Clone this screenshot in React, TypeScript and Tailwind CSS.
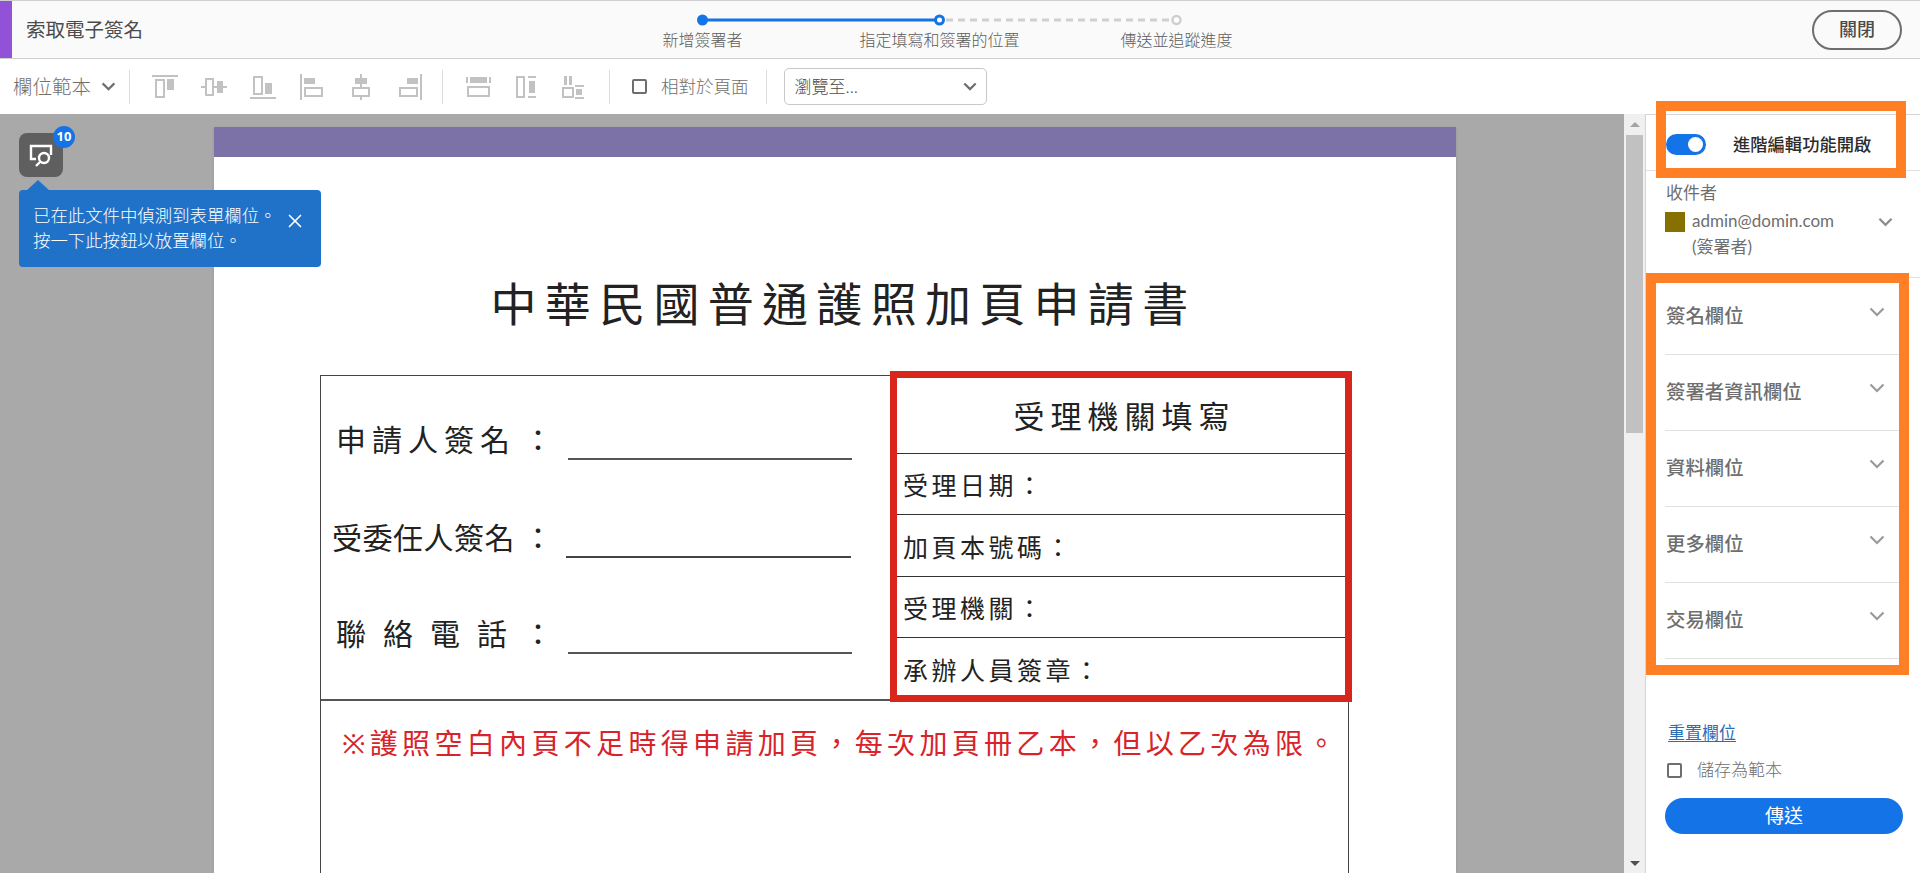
import { X } from "lucide-react";

const fieldGroups = ["簽名欄位", "簽署者資訊欄位", "資料欄位", "更多欄位", "交易欄位"];

function Chevron({ className = "", width = 2.5 }: { className?: string; width?: number }) {
  return (
    <svg viewBox="0 0 16 10" className={className} fill="none" stroke="currentColor" strokeWidth={width}>
      <path d="M1.5 1.5 8 8l6.5-6.5" />
    </svg>
  );
}

// alignment icons of the toolbar, all in a 26x26 box
function ToolIcon({ children, className = "" }: { children: React.ReactNode; className?: string }) {
  return (
    <svg viewBox="0 0 26 26" className={`w-[26px] h-[26px] text-[#c2c2c2] ${className}`} fill="none" stroke="currentColor" strokeWidth="2">
      {children}
    </svg>
  );
}

const fill = { fill: "currentColor", stroke: "none" };

function AlignIcons() {
  return (
    <>
      <div className="flex items-center gap-[23px]">
        <ToolIcon>
          <path d="M0 2h26" />
          <rect x="4" y="6" width="8" height="17" />
          <rect x="15" y="5" width="7" height="11" {...fill} />
        </ToolIcon>
        <ToolIcon>
          <path d="M0 13h5M12 13h4M22 13h4" />
          <rect x="5" y="5" width="7" height="16" />
          <rect x="16" y="7" width="6" height="12" {...fill} />
        </ToolIcon>
        <ToolIcon>
          <path d="M0 24h26" />
          <rect x="4" y="3" width="8" height="17" />
          <rect x="15" y="9" width="7" height="11" {...fill} />
        </ToolIcon>
        <ToolIcon>
          <path d="M2 0v26" />
          <rect x="5" y="4" width="11" height="6" {...fill} />
          <rect x="6" y="14" width="17" height="8" />
        </ToolIcon>
        <ToolIcon>
          <path d="M13 0v4M13 10v4M13 22v4" />
          <rect x="7" y="4" width="12" height="6" {...fill} />
          <rect x="5" y="14" width="16" height="8" />
        </ToolIcon>
        <ToolIcon>
          <path d="M24 0v26" />
          <rect x="10" y="4" width="11" height="6" {...fill} />
          <rect x="3" y="14" width="17" height="8" />
        </ToolIcon>
      </div>
      <div className="w-px h-[34px] bg-[#dcdcdc] ml-[19px] mr-[23px]" />
      <div className="flex items-center gap-[23px]">
        <ToolIcon>
          <path d="M1 3v6M24 3v6" />
          <rect x="4" y="3" width="17" height="6" {...fill} />
          <rect x="2" y="13" width="21" height="9" />
        </ToolIcon>
        <ToolIcon>
          <rect x="2" y="3" width="7" height="20" />
          <path d="M13 3h8M13 23h8" />
          <rect x="14" y="7" width="6" height="12" {...fill} />
        </ToolIcon>
        <ToolIcon className="-ml-[3px]">
          <rect x="2" y="14" width="10" height="9" />
          <rect x="3" y="2" width="3" height="9" {...fill} />
          <rect x="8" y="2" width="3" height="9" {...fill} />
          <path d="M14 12h9M14 24h9" />
          <rect x="15" y="15" width="6" height="6" {...fill} />
        </ToolIcon>
      </div>
    </>
  );
}

function Stepper() {
  return (
    <div className="w-[711px] shrink-0 pt-[8px] self-start">
      <svg viewBox="0 0 711 22" className="w-[711px] h-[22px] block">
        <path d="M118 11H355" stroke="#1473e6" strokeWidth="3" />
        <path d="M362 11H588" stroke="#cfcfcf" strokeWidth="3" strokeDasharray="7 5" />
        <circle cx="118.500" cy="11" r="5.500" fill="#1473e6" />
        <circle cx="355.500" cy="11" r="4" fill="#fff" stroke="#1473e6" strokeWidth="3" />
        <circle cx="592.500" cy="11" r="4" fill="#fff" stroke="#cfcfcf" strokeWidth="2.500" />
      </svg>
      <div className="grid grid-cols-3 text-center text-[16px] leading-[20px] font-light text-[#5c5c5c] -mt-[1px]">
        <span>新增簽署者</span>
        <span>指定填寫和簽署的位置</span>
        <span>傳送並追蹤進度</span>
      </div>
    </div>
  );
}

function ApplicantRows() {
  return (
    <div className="flex-1 flex flex-col text-[30px] leading-[40px] text-[#222]">
      <div className="h-[84px] flex items-end">
        <span className="ml-[15px] w-[187px] tracking-[6px] whitespace-nowrap">申請人簽名</span>
        <span className="w-[45px]">：</span>
        <div className="w-[284px] h-[2px] bg-[#555]" />
      </div>
      <div className="h-[98px] flex items-end">
        <span className="ml-[11px] w-[191px] tracking-[0.500px] whitespace-nowrap">受委任人簽名</span>
        <span className="w-[43px]">：</span>
        <div className="w-[285px] h-[2px] bg-[#444]" />
      </div>
      <div className="h-[96px] flex items-end">
        <span className="ml-[15px] w-[187px] tracking-[17px] whitespace-nowrap">聯絡電話</span>
        <span className="w-[45px]">：</span>
        <div className="w-[284px] h-[2px] bg-[#555]" />
      </div>
    </div>
  );
}

function AgencyBox() {
  const rows = [
    { label: "受理日期：", box: "h-[61px] pt-[4px] border-b border-[#333]" },
    { label: "加頁本號碼：", box: "h-[62px] pt-[4px] border-b border-[#333]" },
    { label: "受理機關：", box: "h-[61px] pt-[4px] border-b border-[#333]" },
    { label: "承辦人員簽章：", box: "h-[58px] pt-[8px]" },
  ];
  return (
    <div className="w-[462px] shrink-0 -mt-[5px] -mb-[3px] -mr-[4px] bg-white border-[7px] border-[#d9261c] text-[#222]">
      <div className="h-[76px] flex items-center justify-center border-b border-[#333] text-[31px] tracking-[6px] pt-[2px] pl-[7px]">
        受理機關填寫
      </div>
      {rows.map((row) => (
        <div key={row.label} className={`${row.box} flex items-center pl-[6px] text-[25px] tracking-[3.500px]`}>
          {row.label}
        </div>
      ))}
    </div>
  );
}

function DocumentPage() {
  return (
    <div className="ml-[214px] mt-[13px] w-[1242px] bg-white shadow-sm">
      <div className="h-[30px] bg-[#7d72a8]" />
      <div className="h-[218px] pt-[75px] pl-[17px] flex items-center justify-center text-[46px] tracking-[8.300px] text-[#222] whitespace-nowrap">
        中華民國普通護照加頁申請書
      </div>
      <div className="ml-[106px] w-[1029px] border border-[#444]">
        <div className="flex h-[325px] border-b-2 border-[#555]">
          <ApplicantRows />
          <AgencyBox />
        </div>
        <div className="h-[300px] pt-[22px] pl-[21px] text-[28px] leading-[40px] tracking-[4.330px] text-[#d8232a] whitespace-nowrap">
          ※護照空白內頁不足時得申請加頁，每次加頁冊乙本，但以乙次為限。
        </div>
      </div>
    </div>
  );
}

function FormDetectHint() {
  return (
    <>
      <div className="absolute left-[19px] top-[19px] w-[44px] h-[44px] rounded-[8px] bg-[#5f5f5f] flex items-center justify-center">
        <svg viewBox="0 0 28 28" className="w-[28px] h-[28px]" fill="none" stroke="#fff" strokeWidth="2.400">
          <path d="M9 18H4V5h20v9" />
          <circle cx="17" cy="17" r="5" />
          <path d="m13 21-4 4" />
        </svg>
        <span className="absolute -right-[12px] -top-[7px] w-[22px] h-[22px] rounded-full bg-[#1473e6] text-white text-[13px] font-bold flex items-center justify-center">
          10
        </span>
      </div>
      <div className="absolute left-[26px] top-[66px] w-0 h-0 border-x-[12px] border-x-transparent border-b-[11px] border-b-[#2072c9]" />
      <div className="absolute left-[19px] top-[76px] w-[302px] h-[77px] rounded-[4px] bg-[#2072c9] text-white text-[17.400px] leading-[25px] font-light pl-[14px] pt-[13px]">
        <div className="whitespace-nowrap">已在此文件中偵測到表單欄位。</div>
        <div className="whitespace-nowrap">按一下此按鈕以放置欄位。</div>
        <X className="absolute left-[265px] top-[20px] w-[22px] h-[22px]" strokeWidth={1.8} />
      </div>
    </>
  );
}

function Scrollbar() {
  return (
    <div className="w-[21px] shrink-0 bg-[#f0f0f0] flex flex-col items-center">
      <div className="h-[21px] flex items-center justify-center">
        <div className="w-0 h-0 border-x-[5px] border-x-transparent border-b-[5px] border-b-[#a3a3a3]" />
      </div>
      <div className="w-[17px] h-[298px] bg-[#c1c1c1]" />
      <div className="mt-auto h-[19px] flex items-center justify-center">
        <div className="w-0 h-0 border-x-[5px] border-x-transparent border-t-[5px] border-t-[#505050]" />
      </div>
    </div>
  );
}

function SidePanel() {
  return (
    <div className="w-[275px] shrink-0 bg-white border-l border-[#d5d5d5] border-t">
      <div className="h-[56px] border-b border-[#e1e1e1] pl-[20px] flex items-center">
        <div className="relative w-[40px] h-[21px] mt-[4px] rounded-full bg-[#1473e6]">
          <div className="absolute right-[3px] top-[3px] w-[15px] h-[15px] rounded-full bg-white" />
        </div>
        <span className="ml-[27px] mt-[4px] text-[17.300px] leading-[24px] font-medium text-[#2c2c2c] whitespace-nowrap">進階編輯功能開啟</span>
      </div>

      <div className="pl-[20px] pt-[10px] text-[#6e6e6e]">
        <div className="text-[17px] leading-[24px]">收件者</div>
        <div className="flex mt-[3px]">
          <div className="w-[20px] h-[20px] mt-[4px] -ml-px bg-[#857000]" />
          <div className="ml-[7px] w-[186px] text-[17px] leading-[26px] font-['Lato','Noto_Sans_CJK_TC',sans-serif]">
            <div>admin@domin.com</div>
            <div>(簽署者)</div>
          </div>
          <Chevron className="w-[15px] h-[10px] mt-[9px] text-[#8e8e8e]" />
        </div>
      </div>

      <div className="mt-[17px] border-t border-[#e1e1e1] pt-px">
        {fieldGroups.map((group) => (
          <div key={group} className="ml-[19px] mr-[20px] h-[76px] border-b border-[#e1e1e1] flex items-center justify-between pl-px pr-[15px] pb-[2px]">
            <span className="text-[19.400px] font-medium text-[#6e6e6e] whitespace-nowrap">{group}</span>
            <Chevron className="w-[16px] h-[10px] mb-[7px] text-[#9a9a9a]" width={2.2} />
          </div>
        ))}
      </div>

      <div className="pl-[22px] mt-[62px] text-[17px] leading-[24px] text-[#2d6db5] underline underline-offset-2">重置欄位</div>
      <div className="pl-[21px] mt-[13px] flex items-center text-[17px] leading-[24px] font-light text-[#6e6e6e]">
        <div className="w-[15px] h-[15px] rounded-[2px] border-[2.500px] border-[#6e6e6e]" />
        <span className="ml-[15px]">儲存為範本</span>
      </div>
      <div className="ml-[19px] mt-[16px] w-[238px] h-[36px] rounded-full bg-[#1473e6] text-white text-[19px] flex items-center justify-center">
        傳送
      </div>
    </div>
  );
}

export default function App() {
  return (
    <div className="relative w-[1920px] h-[873px] overflow-hidden flex flex-col bg-white font-['Noto_Sans','Noto_Sans_CJK_TC',sans-serif]">
      {/* Header */}
      <div className="h-[59px] shrink-0 flex items-center bg-[#fafafa] border-t border-b border-[#d0d0d0]">
        <div className="w-[12px] h-full shrink-0 bg-[#9152d8]" />
        <div className="w-[572px] shrink-0 pl-[14px] text-[19.500px] text-[#4b4b4b] whitespace-nowrap">索取電子簽名</div>
        <Stepper />
        <button className="ml-auto mr-[18px] w-[90px] h-[40px] rounded-full border-2 border-[#6e6e6e] text-[18px] font-medium text-[#4b4b4b]">
          關閉
        </button>
      </div>

      {/* Toolbar */}
      <div className="h-[55px] shrink-0 flex items-center bg-white">
        <span className="ml-[13px] text-[19.500px] font-light text-[#6e6e6e] whitespace-nowrap">欄位範本</span>
        <Chevron className="ml-[10px] w-[15px] h-[9px] text-[#6e6e6e]" />
        <div className="w-px h-[34px] bg-[#dcdcdc] ml-[13px] mr-[22px]" />
        <AlignIcons />
        <div className="w-px h-[34px] bg-[#dcdcdc] ml-[22px] mr-[22px]" />
        <div className="w-[15px] h-[15px] rounded-[2px] border-[2.500px] border-[#6e6e6e]" />
        <span className="ml-[14px] text-[17.500px] font-light text-[#6e6e6e] whitespace-nowrap">相對於頁面</span>
        <div className="w-px h-[34px] bg-[#dcdcdc] ml-[17px] mr-[17px]" />
        <div className="w-[203px] h-[37px] rounded-[5px] border border-[#c8c8c8] flex items-center justify-between pl-[10px] pr-[9px]">
          <span className="text-[17px] font-light text-[#4b4b4b]">瀏覽至...</span>
          <Chevron className="w-[14px] h-[9px] text-[#6e6e6e]" />
        </div>
      </div>

      {/* Body */}
      <div className="flex-1 min-h-0 flex">
        <div className="relative flex-1 min-w-0 overflow-hidden bg-[#a9a9a9]">
          <DocumentPage />
          <FormDetectHint />
        </div>
        <Scrollbar />
        <SidePanel />
      </div>

      {/* Orange annotation frames */}
      <div className="absolute left-[1656px] top-[101px] w-[250px] h-[77px] border-[10px] border-[#ff7f27] pointer-events-none" />
      <div className="absolute left-[1646px] top-[273px] w-[263px] h-[402px] border-[10px] border-[#ff7f27] pointer-events-none" />
    </div>
  );
}
